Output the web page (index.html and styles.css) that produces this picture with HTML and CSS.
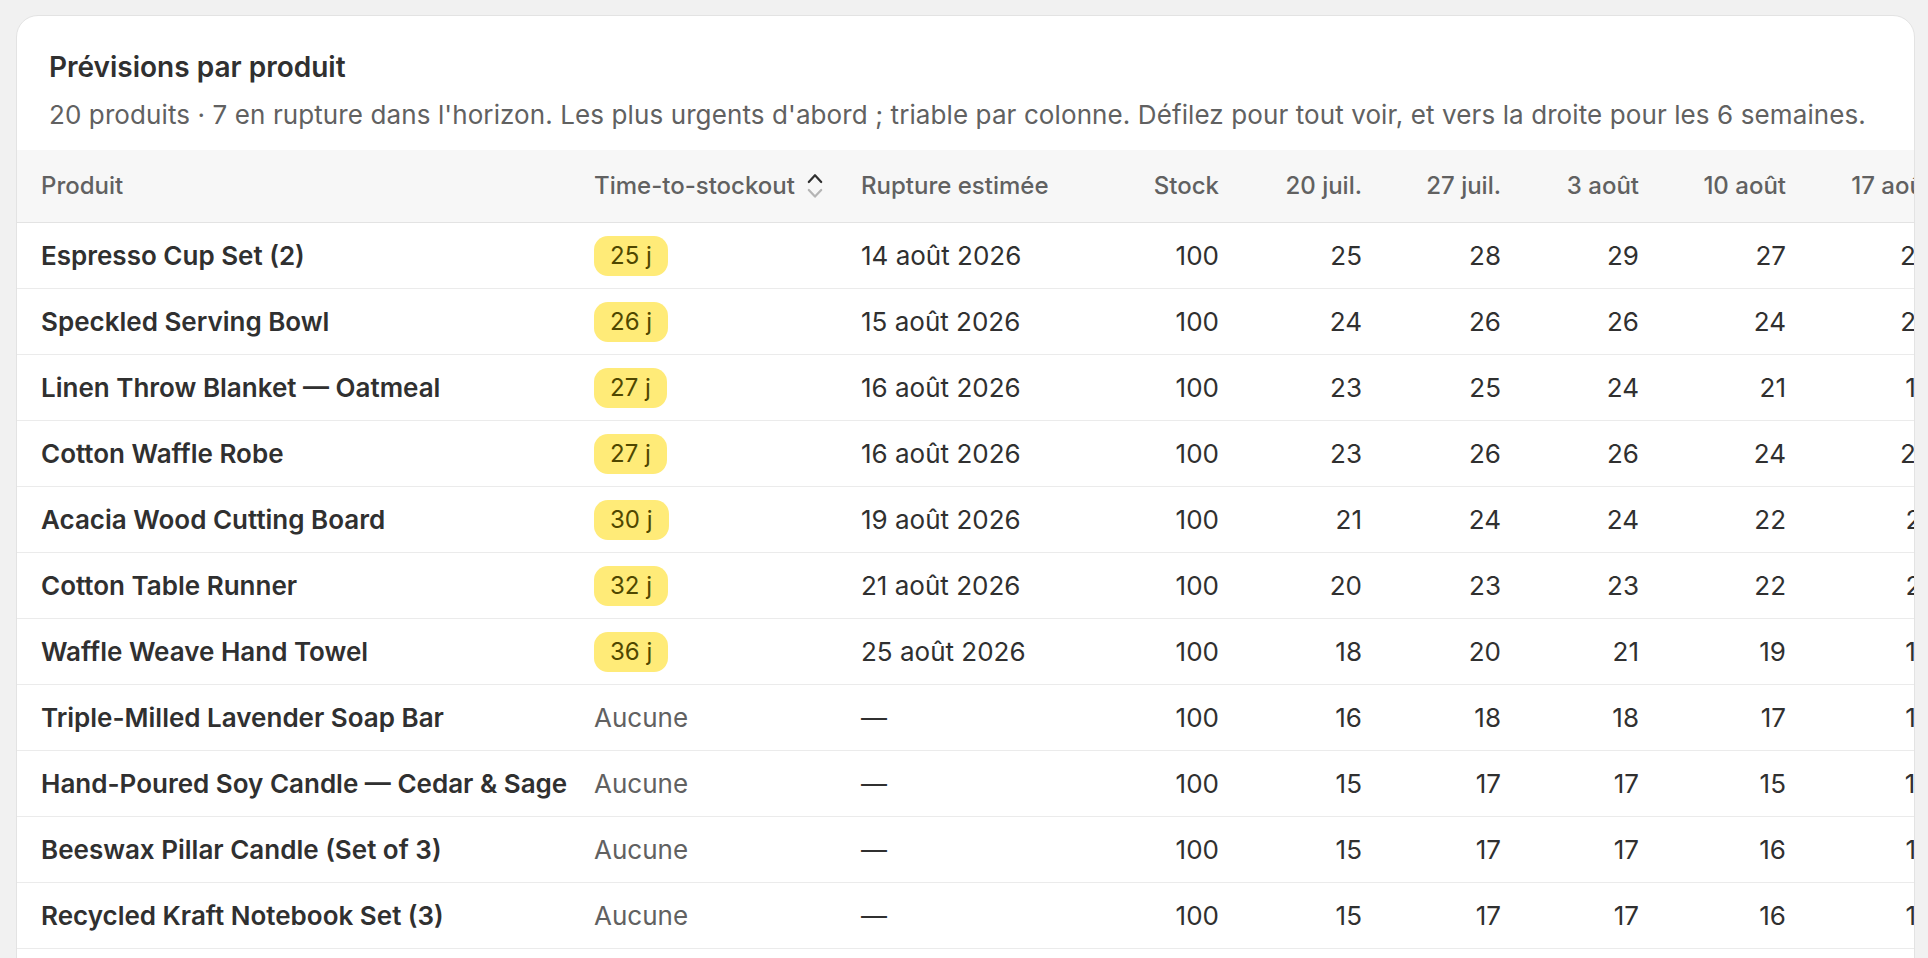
FILE: index.html
```html
<!DOCTYPE html>
<html lang="fr">
<head>
<meta charset="utf-8">
<title>Prévisions par produit</title>
<link rel="stylesheet" href="styles.css">
</head>
<body>
<main class="page">
  <section class="card">
    <header class="card-head">
      <h2 class="card-title">Prévisions par produit</h2>
      <p class="card-sub">20 produits · 7 en rupture dans l'horizon. Les plus urgents d'abord ; triable par colonne. Défilez pour tout voir, et vers la droite pour les 6 semaines.</p>
    </header>
    <div class="table-wrap">
      <table class="forecast">
        <colgroup>
          <col class="c-name">
          <col class="c-tts">
          <col class="c-date">
          <col class="c-stock">
          <col class="c-w1">
          <col class="c-w2">
          <col class="c-w3">
          <col class="c-w4">
          <col class="c-w5">
          <col class="c-w6">
        </colgroup>
        <thead>
          <tr>
            <th class="first">Produit</th>
            <th><span class="sort">Time-to-stockout<svg class="sort-icon" viewBox="0 0 18 28" width="18" height="28" aria-hidden="true"><path d="M2.8 10 L9 3.2 L15.2 10" class="up"/><path d="M2.8 18 L9 24.6 L15.2 18" class="down"/></svg></span></th>
            <th>Rupture estimée</th>
            <th class="num">Stock</th>
            <th class="num">20 juil.</th>
            <th class="num">27 juil.</th>
            <th class="num">3 août</th>
            <th class="num">10 août</th>
            <th class="num">17 août</th>
            <th class="num">24 août</th>
          </tr>
        </thead>
        <tbody>
          <tr><td class="first name">Espresso Cup Set (2)</td><td><span class="badge">25 j</span></td><td>14 août 2026</td><td class="num">100</td><td class="num">25</td><td class="num">28</td><td class="num">29</td><td class="num">27</td><td class="num">26</td><td class="num">25</td></tr>
          <tr><td class="first name">Speckled Serving Bowl</td><td><span class="badge">26 j</span></td><td>15 août 2026</td><td class="num">100</td><td class="num">24</td><td class="num">26</td><td class="num">26</td><td class="num">24</td><td class="num">25</td><td class="num">24</td></tr>
          <tr><td class="first name">Linen Throw Blanket — Oatmeal</td><td><span class="badge">27 j</span></td><td>16 août 2026</td><td class="num">100</td><td class="num">23</td><td class="num">25</td><td class="num">24</td><td class="num">21</td><td class="num">19</td><td class="num">22</td></tr>
          <tr><td class="first name">Cotton Waffle Robe</td><td><span class="badge">27 j</span></td><td>16 août 2026</td><td class="num">100</td><td class="num">23</td><td class="num">26</td><td class="num">26</td><td class="num">24</td><td class="num">23</td><td class="num">22</td></tr>
          <tr><td class="first name">Acacia Wood Cutting Board</td><td><span class="badge">30 j</span></td><td>19 août 2026</td><td class="num">100</td><td class="num">21</td><td class="num">24</td><td class="num">24</td><td class="num">22</td><td class="num">21</td><td class="num">20</td></tr>
          <tr><td class="first name">Cotton Table Runner</td><td><span class="badge">32 j</span></td><td>21 août 2026</td><td class="num">100</td><td class="num">20</td><td class="num">23</td><td class="num">23</td><td class="num">22</td><td class="num">21</td><td class="num">19</td></tr>
          <tr><td class="first name">Waffle Weave Hand Towel</td><td><span class="badge">36 j</span></td><td>25 août 2026</td><td class="num">100</td><td class="num">18</td><td class="num">20</td><td class="num">21</td><td class="num">19</td><td class="num">18</td><td class="num">17</td></tr>
          <tr><td class="first name">Triple-Milled Lavender Soap Bar</td><td class="muted">Aucune</td><td>—</td><td class="num">100</td><td class="num">16</td><td class="num">18</td><td class="num">18</td><td class="num">17</td><td class="num">16</td><td class="num">15</td></tr>
          <tr><td class="first name">Hand-Poured Soy Candle — Cedar &amp; Sage</td><td class="muted">Aucune</td><td>—</td><td class="num">100</td><td class="num">15</td><td class="num">17</td><td class="num">17</td><td class="num">15</td><td class="num">14</td><td class="num">15</td></tr>
          <tr><td class="first name">Beeswax Pillar Candle (Set of 3)</td><td class="muted">Aucune</td><td>—</td><td class="num">100</td><td class="num">15</td><td class="num">17</td><td class="num">17</td><td class="num">16</td><td class="num">15</td><td class="num">14</td></tr>
          <tr><td class="first name">Recycled Kraft Notebook Set (3)</td><td class="muted">Aucune</td><td>—</td><td class="num">100</td><td class="num">15</td><td class="num">17</td><td class="num">17</td><td class="num">16</td><td class="num">15</td><td class="num">15</td></tr>
        </tbody>
      </table>
    </div>
  </section>
</main>
</body>
</html>
```

FILE: styles.css
```css
* { box-sizing: border-box; }

html, body {
  margin: 0;
  background: #f1f1f1;
}

body {
  font-family: "Inter", "Noto Sans", "Liberation Sans", sans-serif;
  color: #303030;
}

.page {
  padding: 15px 13px 0 16px;
}

.card {
  background: #ffffff;
  border: 1px solid #e3e3e3;
  border-radius: 22px;
  overflow: hidden;
  padding-bottom: 48px;
}

.card-head {
  padding: 31px 32px 15px;
  display: flex;
  flex-direction: column;
  gap: 8px;
}

.card-title {
  margin: 0;
  font-size: 28px;
  line-height: 40px;
  font-weight: 600;
  color: #303030;
}

.card-sub {
  margin: 0;
  font-size: 26px;
  line-height: 40px;
  font-weight: 400;
  letter-spacing: 0.1px;
  color: #616161;
  white-space: nowrap;
}

.table-wrap {
  overflow-x: auto;
  scrollbar-width: none;
}

.forecast {
  border-collapse: collapse;
  table-layout: fixed;
  width: 2073px;
  font-size: 26px;
  line-height: 40px;
}

.c-name { width: 565px; }
.c-tts { width: 267px; }
.c-date { width: 251px; }
.c-stock { width: 131px; }
.c-w1 { width: 143px; }
.c-w2 { width: 139px; }
.c-w3 { width: 138px; }
.c-w4 { width: 147px; }
.c-w5 { width: 146px; }
.c-w6 { width: 146px; }

.forecast th,
.forecast td {
  padding: 0 12px;
  text-align: left;
  white-space: nowrap;
  vertical-align: middle;
}

.forecast th {
  background: #f7f7f7;
  color: #616161;
  font-size: 24px;
  font-weight: 500;
  padding-top: 16px;
  padding-bottom: 16px;
  border-bottom: 1px solid #e3e3e3;
}

.forecast td {
  height: 66px;
  padding-top: 13px;
  padding-bottom: 12px;
  border-bottom: 1px solid #ebebeb;
  color: #303030;
}

.forecast .first {
  padding-left: 24px;
}

.forecast .num {
  text-align: right;
}

.forecast .name {
  font-weight: 600;
}

.forecast .muted {
  color: #616161;
}

.sort {
  display: inline-flex;
  align-items: center;
  gap: 11px;
}

.sort-icon {
  display: block;
  fill: none;
  stroke-width: 2.2;
  stroke-linecap: round;
  stroke-linejoin: round;
}

.sort-icon .up { stroke: #303030; }
.sort-icon .down { stroke: #b5b5b5; }

.badge {
  display: inline-block;
  vertical-align: top;
  height: 40px;
  line-height: 40px;
  padding: 0 16px;
  border-radius: 14px;
  background: #ffeb78;
  color: #4f4700;
  font-size: 24px;
  font-weight: 400;
}
```
